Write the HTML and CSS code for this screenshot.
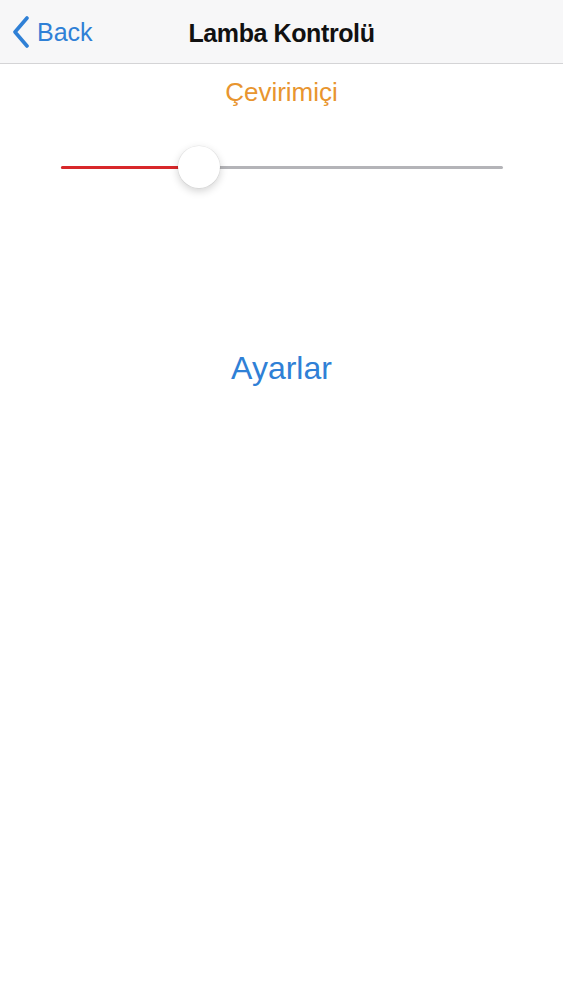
FILE: index.html
```html
<!DOCTYPE html>
<html lang="tr">
<head>
<meta charset="utf-8">
<title>Lamba Kontrolü</title>
<link rel="stylesheet" href="styles.css">
</head>
<body>
<header class="nav">
  <a class="back" href="#">
    <svg class="chev" width="20" height="32" viewBox="0 0 20 32"><path d="M16 2 L4 16 L16 30" fill="none" stroke="currentColor" stroke-width="3.6" stroke-linecap="round" stroke-linejoin="round"/></svg>
    <span>Back</span>
  </a>
  <h1 class="title">Lamba Kontrolü</h1>
  <div></div>
</header>
<main class="content">
  <p class="status">Çevirimiçi</p>
  <div class="slider">
    <div class="track">
      <div class="fill" style="width:120px"></div>
      <div class="thumb" style="left:117px"></div>
    </div>
  </div>
  <a class="settings" href="#">Ayarlar</a>
</main>
</body>
</html>
```
FILE: styles.css
```css
html, body {
  margin: 0;
  padding: 0;
  background: #ffffff;
  font-family: "Liberation Sans", Arial, sans-serif;
}
.nav {
  height: 63px;
  border-bottom: 1px solid #d4d4d6;
  background: #f7f7f8;
  display: grid;
  grid-template-columns: 1fr auto 1fr;
  align-items: center;
}
.back {
  display: flex;
  align-items: center;
  gap: 6px;
  padding-left: 11px;
  color: #2f80d6;
  text-decoration: none;
  font-size: 25px;
}
.chev {
  display: block;
  margin-top: 1px;
}
.back span {
  line-height: 30px;
}
.title {
  margin: 0;
  font-size: 25px;
  font-weight: bold;
  letter-spacing: -0.4px;
  color: #111111;
  line-height: 30px;
  margin-top: 2px;
}
.content {
  display: flex;
  flex-direction: column;
  align-items: center;
}
.status {
  margin: 13px 0 0;
  font-size: 26px;
  line-height: 30px;
  color: #e8952f;
}
.slider {
  margin-top: 38px;
  width: 442px;
  height: 44px;
  display: flex;
  align-items: center;
}
.track {
  position: relative;
  width: 100%;
  height: 3px;
  background: #b4b4b8;
  border-radius: 2px;
}
.fill {
  height: 100%;
  background: #d8272a;
  border-radius: 2px;
}
.thumb {
  position: absolute;
  top: -20px;
  width: 42px;
  height: 42px;
  border-radius: 50%;
  background: #ffffff;
  box-shadow: 0 0 0 0.5px rgba(0,0,0,0.08), 0 3px 8px rgba(0,0,0,0.18);
}
.settings {
  margin-top: 160px;
  font-size: 32px;
  line-height: 38px;
  color: #2f80d6;
  text-decoration: none;
}
```
